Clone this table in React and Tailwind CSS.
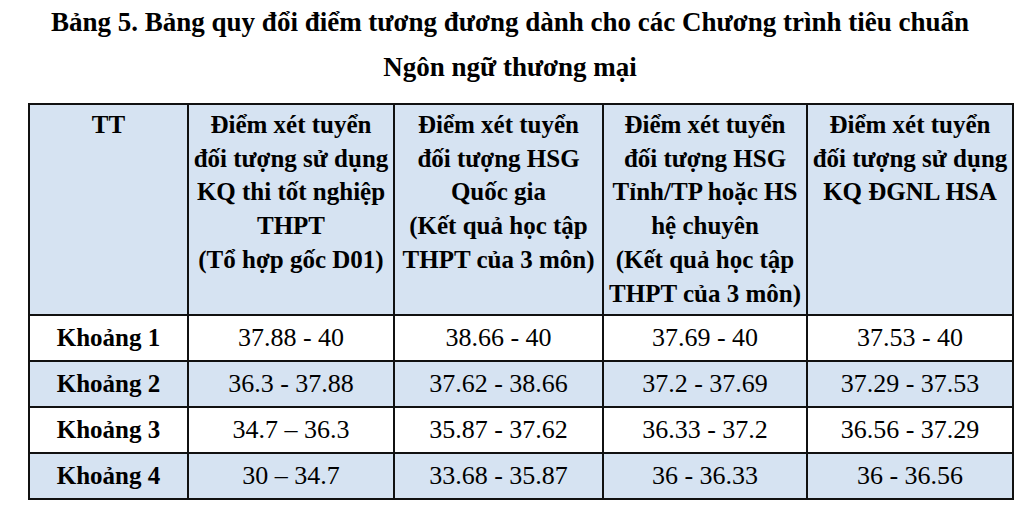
const headers = [
  ['TT'],
  ['Điểm xét tuyển', 'đối tượng sử dụng', 'KQ thi tốt nghiệp', 'THPT', '(Tổ hợp gốc D01)'],
  ['Điểm xét tuyển', 'đối tượng HSG', 'Quốc gia', '(Kết quả học tập', 'THPT của 3 môn)'],
  ['Điểm xét tuyển', 'đối tượng HSG', 'Tỉnh/TP hoặc HS', 'hệ chuyên', '(Kết quả học tập', 'THPT của 3 môn)'],
  ['Điểm xét tuyển', 'đối tượng sử dụng', 'KQ ĐGNL HSA'],
];

const rows = [
  ['Khoảng 1', '37.88 - 40', '38.66 - 40', '37.69 - 40', '37.53 - 40'],
  ['Khoảng 2', '36.3 - 37.88', '37.62 - 38.66', '37.2 - 37.69', '37.29 - 37.53'],
  ['Khoảng 3', '34.7 – 36.3', '35.87 - 37.62', '36.33 - 37.2', '36.56 - 37.29'],
  ['Khoảng 4', '30 – 34.7', '33.68 - 35.87', '36 - 36.33', '36 - 36.56'],
];

const widths = ['w-[159px]', 'w-[206px]', 'w-[209px]', 'w-[204px]', 'w-[206px]'];

export default function App() {
  return (
    <div className="w-[1020px] h-[511px] bg-white text-black overflow-hidden font-['Liberation_Serif','Times_New_Roman',serif]">
      <div className="text-center text-[27px] font-bold leading-[45px]">
        <p>Bảng 5. Bảng quy đổi điểm tương đương dành cho các Chương trình tiêu chuẩn</p>
        <p>Ngôn ngữ thương mại</p>
      </div>

      <table className="ml-[28px] mt-[13px] border-collapse table-fixed w-[984px] font-['Liberation_Serif','Times_New_Roman',serif] text-black">
        <thead>
          <tr className="bg-[#d6e3f2] h-[211px]">
            {headers.map((lines, i) => (
              <th
                key={i}
                className={`${widths[i]} border-2 border-[#111] align-top text-center font-bold text-[25px] leading-[33.7px] pt-[3px] px-0`}
              >
                {lines.map((l) => (
                  <div key={l} className="whitespace-nowrap">{l}</div>
                ))}
              </th>
            ))}
          </tr>
        </thead>
        <tbody>
          {rows.map((r, ri) => (
            <tr key={ri} className={ri % 2 === 1 ? 'bg-[#d6e3f2] h-[46px]' : 'bg-white h-[46px]'}>
              {r.map((c, ci) => (
                <td
                  key={ci}
                  className={`border-2 border-[#111] text-center leading-[28px] ${ci === 0 ? 'font-bold text-[25px]' : 'text-[26px]'}`}
                >
                  {c}
                </td>
              ))}
            </tr>
          ))}
        </tbody>
      </table>
    </div>
  );
}
